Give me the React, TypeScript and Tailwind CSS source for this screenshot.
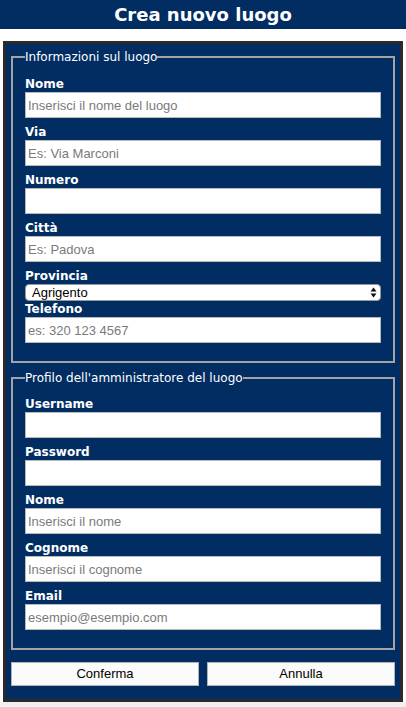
import { useState } from 'react';

const province = ['Agrigento', 'Alessandria', 'Ancona', 'Aosta', 'Arezzo', 'Padova', 'Roma', 'Venezia'];

function Field({ label, placeholder, type = 'text' }: { label: string; placeholder?: string; type?: string }) {
  return (
    <label className="block">
      <span className="block text-[12px] leading-4 font-bold text-white">{label}</span>
      <input
        type={type}
        placeholder={placeholder}
        className="block w-full h-[26px] mb-[6px] px-[2px] bg-white border border-[#b8b8b8] text-[13px] text-black font-['Liberation_Sans',Arial,sans-serif] placeholder:text-[#7a7a7a] outline-none"
      />
    </label>
  );
}

export default function App() {
  const [provincia, setProvincia] = useState('Agrigento');

  return (
    <div className="min-h-screen flex flex-col bg-white font-['DejaVu_Sans',Verdana,sans-serif]">
      <header className="h-[29px] bg-[#012d63] flex items-center justify-center">
        <h1 className="text-[18px] font-bold text-white leading-none">Crea nuovo luogo</h1>
      </header>

      <form
        className="mt-[12px] mx-[3px] border-[3px] border-[#2a2a2a] bg-[#012d63] px-[5px] pt-[5px] pb-[13px]"
        onSubmit={e => e.preventDefault()}
      >
        <fieldset className="border-2 border-[#a3a3a3] px-[12px] pt-[11px] pb-[12px] m-0">
          <legend className="text-[12px] leading-4 text-white px-0">Informazioni sul luogo</legend>
          <Field label="Nome" placeholder="Inserisci il nome del luogo" />
          <Field label="Via" placeholder="Es: Via Marconi" />
          <Field label="Numero" />
          <Field label="Città" placeholder="Es: Padova" />

          <label className="block">
            <span className="block text-[12px] leading-4 font-bold text-white">Provincia</span>
            <div className="relative">
              <select
                value={provincia}
                onChange={e => setProvincia(e.target.value)}
                className="block w-full h-[17px] appearance-none rounded-[4px] border border-[#9a9a9a] bg-white pl-[6px] text-[13px] leading-[15px] text-black font-['Liberation_Sans',Arial,sans-serif] outline-none"
              >
                {province.map(p => (
                  <option key={p}>{p}</option>
                ))}
              </select>
              <svg className="absolute right-[4px] top-[3px] pointer-events-none" width="7" height="11" viewBox="0 0 7 11">
                <path d="M3.5 0.5 L6.5 4.5 L0.5 4.5 Z" fill="#111" />
                <path d="M3.5 10.5 L6.5 6.5 L0.5 6.5 Z" fill="#111" />
              </svg>
            </div>
          </label>

          <Field label="Telefono" placeholder="es: 320 123 4567" type="tel" />
        </fieldset>

        <fieldset className="mt-[7px] border-2 border-[#a3a3a3] px-[12px] pt-[10px] pb-[12px] m-0">
          <legend className="text-[12px] leading-4 text-white px-0">Profilo dell'amministratore del luogo</legend>
          <Field label="Username" />
          <Field label="Password" type="password" />
          <Field label="Nome" placeholder="Inserisci il nome" />
          <Field label="Cognome" placeholder="Inserisci il cognome" />
          <Field label="Email" placeholder="esempio@esempio.com" type="email" />
        </fieldset>

        <div className="mt-[12px] grid grid-cols-2 gap-[8px]">
          <button
            type="submit"
            className="h-[24px] bg-[#fbfbfb] border border-[#b4b4b4] text-[13px] text-black font-['Liberation_Sans',Arial,sans-serif]"
          >
            Conferma
          </button>
          <button
            type="button"
            className="h-[24px] bg-[#fbfbfb] border border-[#b4b4b4] text-[13px] text-black font-['Liberation_Sans',Arial,sans-serif]"
          >
            Annulla
          </button>
        </div>
      </form>

      <div className="flex-1 bg-[#f0f0f0]" />
    </div>
  );
}
